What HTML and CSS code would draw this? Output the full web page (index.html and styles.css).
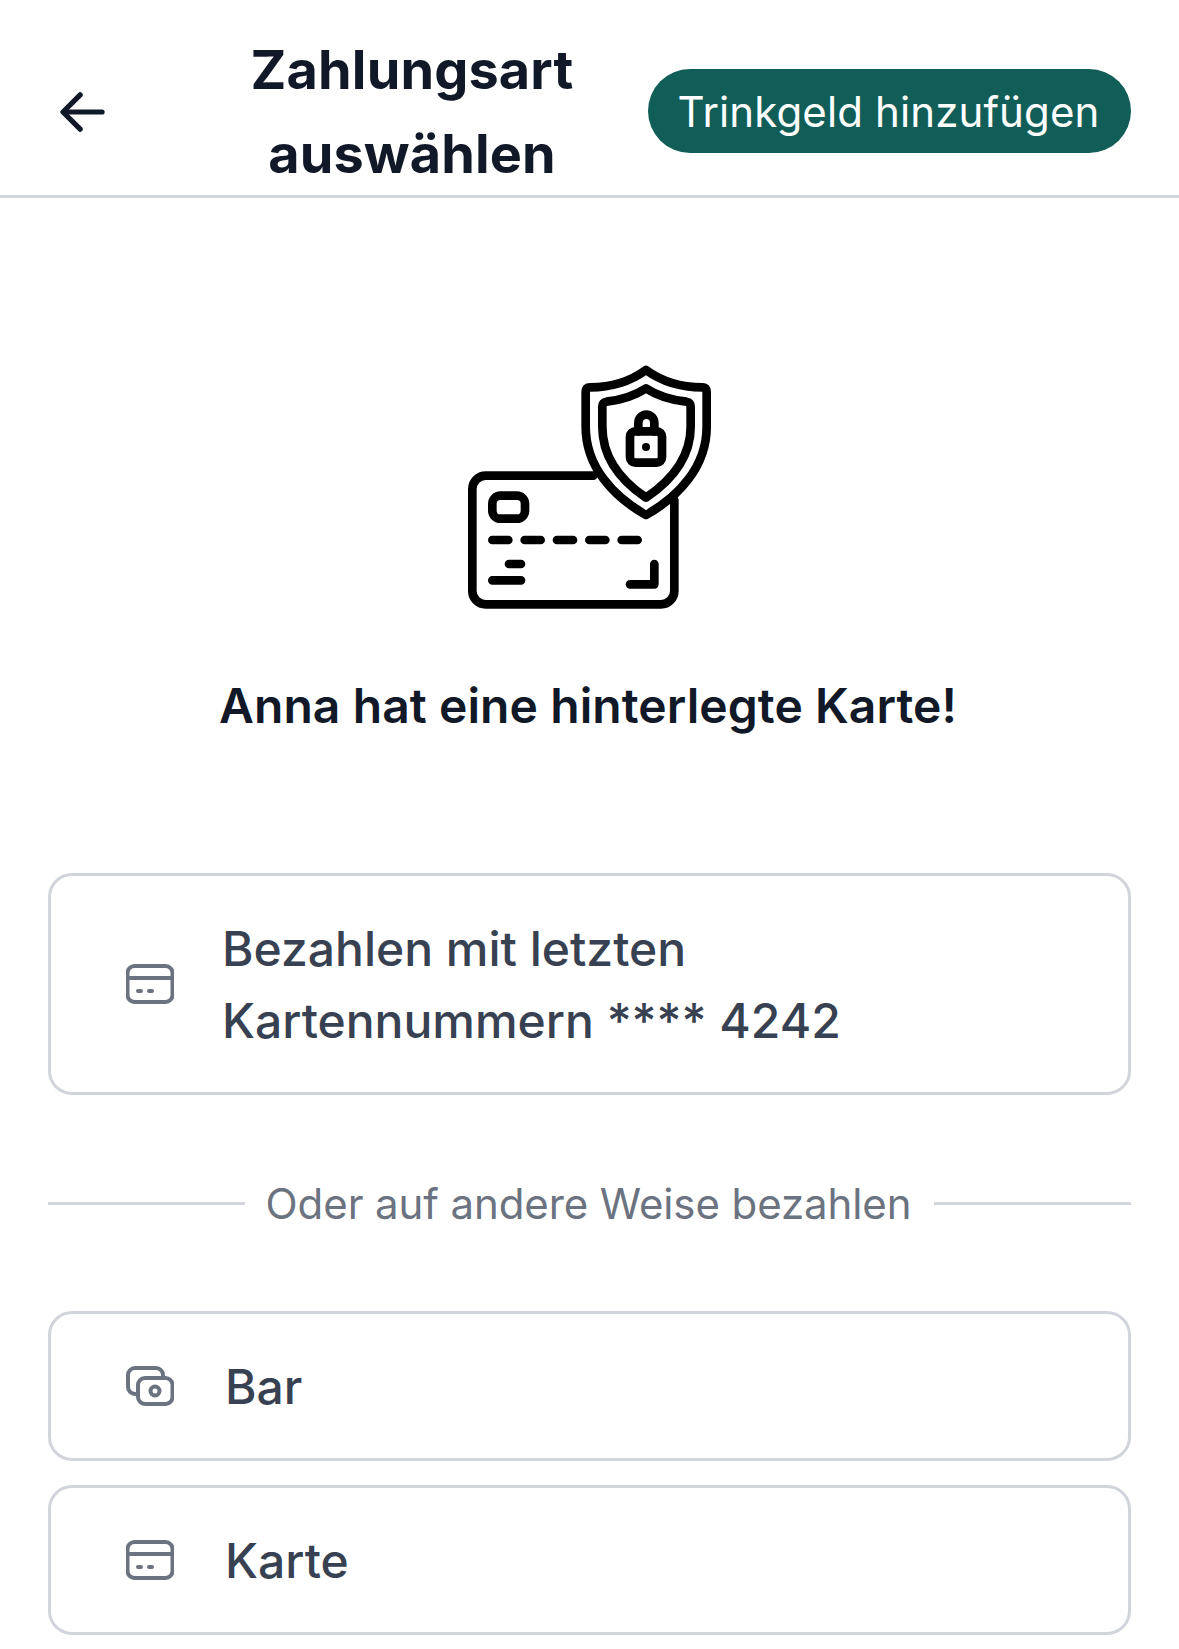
FILE: index.html
```html
<!DOCTYPE html>
<html lang="de">
  <head>
    <meta charset="UTF-8" />
    <meta name="viewport" content="width=device-width, initial-scale=1.0" />
    <title>Zahlungsart auswählen</title>
    <link rel="stylesheet" href="styles.css">
  </head>
  <body>
    <header class="topbar">
      <svg class="back" viewBox="0 0 48 42" fill="none" stroke="currentColor" stroke-width="5.5" stroke-linecap="round" stroke-linejoin="round">
        <path d="M44 21H4"/>
        <path d="M21 3L3 21L21 39"/>
      </svg>
      <h1 class="page-title">Zahlungsart auswählen</h1>
      <div class="tip-button">Trinkgeld hinzufügen</div>
    </header>
    <main class="content">
      <svg class="hero" viewBox="0 0 840 810" fill="none" stroke="#000" stroke-width="26" stroke-linecap="round" stroke-linejoin="round">
        <path d="M430 377H107a40 40 0 0 0-40 40V723a40 40 0 0 0 40 40H633a40 40 0 0 0 40-40V450"/>
        <path d="M588 60C540 95 480 112 420 112Q407 112 407 125V230C407 350 490 440 588 495C686 440 770 350 770 230V125Q770 112 757 112C697 112 636 95 588 60Z"/>
        <path d="M588 115C550 140 510 150 470 155Q457 157 457 170V230C457 320 510 390 588 443C666 390 722 320 722 230V170Q722 157 709 155C666 150 626 140 588 115Z"/>
        <rect x="540" y="244" width="96" height="94" rx="16"/>
        <path d="M565 244V219a23 24 0 0 1 48 0V244"/>
        <circle cx="588" cy="291" r="12" fill="#000" stroke="none"/>
        <rect x="127" y="437" width="98" height="69" rx="24"/>
        <path d="M127 570H175M224 570H272M321 570H369M418 570H466M515 570H563"/>
        <path d="M177 642H213M127 691H213"/>
        <path d="M613 642V703H540"/>
      </svg>
      <h2 class="notice">Anna hat eine hinterlegte Karte!</h2>
      <div class="option option-saved">
        <svg class="option-icon" viewBox="0 0 48 40" fill="none" stroke="currentColor" stroke-width="4" stroke-linecap="round" stroke-linejoin="round">
          <rect x="1.5" y="2" width="45" height="36" rx="7"/>
          <path d="M2 14H46"/>
          <path d="M12 27H15M23 27H26"/>
        </svg>
        <span class="option-text">Bezahlen mit letzten<br>Kartennummern **** 4242</span>
      </div>
      <div class="divider">
        <span class="divider-line"></span>
        <span class="divider-text">Oder auf andere Weise bezahlen</span>
        <span class="divider-line"></span>
      </div>
      <div class="option">
        <svg class="option-icon" viewBox="0 0 48 40" fill="none" stroke="currentColor" stroke-width="4" stroke-linecap="round" stroke-linejoin="round">
          <path d="M10 28H9a7 7 0 0 1-7-7V9a7 7 0 0 1 7-7H30a7 7 0 0 1 7 7V12"/>
          <rect x="12" y="12" width="34.5" height="26" rx="7"/>
          <circle cx="29" cy="25" r="4.5"/>
        </svg>
        <span class="option-text">Bar</span>
      </div>
      <div class="option">
        <svg class="option-icon" viewBox="0 0 48 40" fill="none" stroke="currentColor" stroke-width="4" stroke-linecap="round" stroke-linejoin="round">
          <rect x="1.5" y="2" width="45" height="36" rx="7"/>
          <path d="M2 14H46"/>
          <path d="M12 27H15M23 27H26"/>
        </svg>
        <span class="option-text">Karte</span>
      </div>
    </main>
  </body>
</html>
```

FILE: styles.css
```css
body {
  margin: 0;
  background-color: #fff;
  font-family: "Inter", "Liberation Sans", sans-serif;
  color: #111827;
}
.topbar {
  display: flex;
  align-items: center;
  height: 168px;
  padding: 27px 48px 0 60px;
  border-bottom: 3px solid #d1d5db;
}
.back {
  flex: none;
  width: 46px;
  height: 40px;
  margin-top: 2px;
  color: #111827;
}
.page-title {
  flex: 1;
  margin: 0 0 0 70px;
  padding-top: 2px;
  font-size: 54px;
  line-height: 84px;
  font-weight: 700;
  letter-spacing: 0.15px;
  text-align: center;
}
.tip-button {
  flex: none;
  padding: 13px 31.5px 11px 29.5px;
  border-radius: 42px;
  background-color: #115e59;
  color: #fff;
  font-size: 42px;
  line-height: 60px;
  letter-spacing: 0.12px;
}
.content {
  display: flex;
  flex-direction: column;
  padding: 152px 48px 14px;
}
.hero {
  align-self: center;
  width: 280px;
  height: 270px;
}
.notice {
  margin: 50px 0 131px;
  padding-right: 3px;
  font-size: 48px;
  line-height: 72px;
  font-weight: 600;
  letter-spacing: 0.08px;
  text-align: center;
}
.option {
  display: flex;
  align-items: center;
  gap: 51px;
  padding: 35px 75px;
  border: 3px solid #d1d5db;
  border-radius: 24px;
  color: #374151;
  font-size: 48px;
  line-height: 72px;
  font-weight: 500;
  margin-bottom: 24px;
}
.option-saved {
  gap: 48px;
  margin-bottom: 0;
}
.option-text {
  padding-top: 2px;
}
.option-icon {
  flex: none;
  width: 48px;
  height: 40px;
  color: #6b7280;
}
.divider {
  display: flex;
  align-items: center;
  gap: 21px;
  margin: 77px 0 77px;
}
.divider-line {
  flex: 1;
  height: 3px;
  background-color: #d1d5db;
}
.divider-text {
  margin-right: 2px;
  padding-top: 2px;
  color: #6b7280;
  font-size: 42px;
  line-height: 60px;
  letter-spacing: -0.1px;
}
```
